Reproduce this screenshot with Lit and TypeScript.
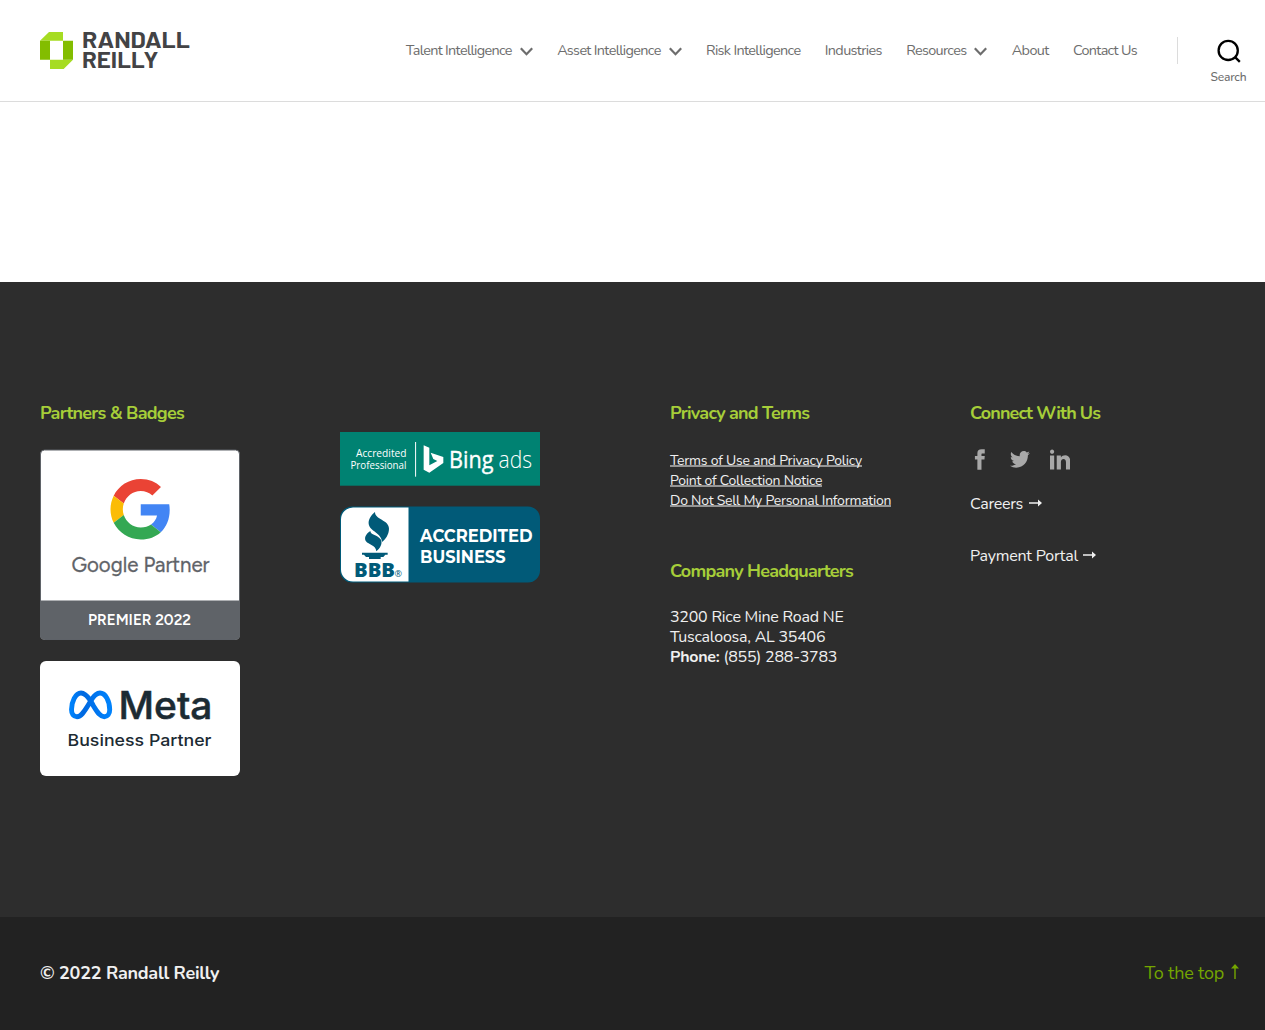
import { LitElement, html, css, svg, nothing } from "lit";
import { customElement, property } from "lit/decorators.js";

/** One line of text, tracked so that it fills a given width. */
@customElement("fit-label")
class FitLabel extends LitElement {
  @property({ type: Number }) width = 0;
  @property() text = "";

  static styles = css`
    :host { display: inline-block; white-space: nowrap; }
    .line { display: inline-block; white-space: pre; }
  `;

  updated() {
    const line = this.renderRoot.querySelector(".line") as HTMLElement;
    line.style.letterSpacing = "0px";
    const natural = line.getBoundingClientRect().width;
    const step = (this.width - natural) / this.text.length;
    line.style.letterSpacing = `${step.toFixed(3)}px`;
  }

  render() {
    return html`<span class="line">${this.text}</span>`;
  }
}

const fit = (text: string, width: number) =>
  html`<fit-label .text=${text} .width=${width}></fit-label>`;

@customElement("site-header")
class SiteHeader extends LitElement {
  static styles = css`
    :host { display: block; }
    .bar {
      box-sizing: border-box; height: 102px; border-bottom: 1px solid #dcdcdc;
      background: #fff; display: flex; align-items: center; padding: 0 0 1px 40px;
      color: #6d6d6d; font-size: 14.4px;
    }
    .logo { display: block; margin-top: 1px; overflow: visible; }
    nav { display: flex; gap: 24.3px; margin-left: auto; line-height: 20px; align-items: center; }
    .item { display: flex; align-items: center; gap: 8px; }
    .chev { display: block; margin-top: 3px; }
    .rule { width: 1px; height: 27px; background: #dcdcdc; margin-left: 40px; }
    .search {
      width: 87px; display: flex; flex-direction: column; align-items: center;
      padding: 23px 0 0 14px; box-sizing: border-box; font-size: 12px; line-height: 16px; font-weight: 500;
    }
    .search svg { display: block; margin-bottom: 6px; }
  `;

  items: [string, number, boolean][] = [
    ["Talent Intelligence", 106, true],
    ["Asset Intelligence", 103.5, true],
    ["Risk Intelligence", 94.5, false],
    ["Industries", 57.2, false],
    ["Resources", 60.2, true],
    ["About", 37, false],
    ["Contact Us", 64, false],
  ];

  render() {
    return html`
      <header class="bar">
        <svg class="logo" width="150" height="38" viewBox="0 0 450 114">
          <path fill="#a6dc22" d="M0 26 27 0h42v26zM30 83h69l-28 28H30z" />
          <path fill="#83bd00" d="M0 26h30v57H0zM69 26h30v57H69z" />
          <g fill="#434345" font-family="'DIN Next', Barlow, Roboto, sans-serif" font-weight="700" font-size="67">
            <text x="126" y="47" textLength="324" lengthAdjust="spacingAndGlyphs">RANDALL</text>
            <text x="126" y="109" textLength="229" lengthAdjust="spacingAndGlyphs">REILLY</text>
          </g>
        </svg>
        <nav>
          ${this.items.map(([t, w, sub]) => html`
            <span class="item">${fit(t, w)}${sub
              ? html`<svg class="chev" width="13" height="9" viewBox="0 0 13 9">
                  <path d="M.8 1.200 6.500 7.200 12.200 1.200" fill="none" stroke="#6d6d6d" stroke-width="2.200" />
                </svg>`
              : nothing}</span>`)}
        </nav>
        <span class="rule"></span>
        <span class="search">
          <svg width="24" height="24" viewBox="0 0 24 24" fill="none" stroke="#000" stroke-width="2.300">
            <circle cx="11.200" cy="11.400" r="9.600" /><path d="m17.800 17.900 5 5" />
          </svg>
          ${fit("Search", 36)}
        </span>
      </header>`;
  }
}

const googleBadge = svg`
  <svg class="badge" width="200" height="191" viewBox="0 0 200 191">
    <rect x=".5" y="1" width="199" height="189.500" rx="4" fill="#fff" stroke="#5f6368" />
    <path d="M0 151.500h200v34.500a4.500 4.500 0 0 1-4.500 4.500H4.500A4.500 4.500 0 0 1 0 186z" fill="#5f6368" />
    <g transform="translate(70.500 30) scale(1.260)">
      <path fill="#ea4335" d="M24 9.500c3.540 0 6.710 1.220 9.210 3.600l6.850-6.850C35.900 2.380 30.470 0 24 0 14.620 0 6.510 5.380 2.560 13.220l7.980 6.190C12.430 13.720 17.740 9.500 24 9.500z" />
      <path fill="#4285f4" d="M46.980 24.550c0-1.570-.150-3.090-.380-4.550H24v9.020h12.940c-.580 2.960-2.260 5.480-4.780 7.180l7.730 6c4.510-4.180 7.090-10.360 7.090-17.650z" />
      <path fill="#fbbc05" d="M10.530 28.590c-.480-1.450-.760-2.990-.760-4.590s.270-3.140.760-4.590l-7.980-6.190C.920 16.460 0 20.120 0 24c0 3.880.920 7.540 2.560 10.780l7.970-6.190z" />
      <path fill="#34a853" d="M24 48c6.480 0 11.930-2.130 15.890-5.810l-7.730-6c-2.150 1.450-4.920 2.300-8.160 2.300-6.260 0-11.570-4.220-13.470-9.910l-7.980 6.190C6.510 42.620 14.620 48 24 48z" />
    </g>
    <g font-family="'Google Sans', Figtree, Outfit, 'DM Sans', Lato, sans-serif">
      <text x="31.500" y="123" font-size="21" fill="#5f6368" stroke="#5f6368" stroke-width=".3" textLength="138" lengthAdjust="spacingAndGlyphs">Google Partner</text>
      <text x="48" y="176" font-size="15.500" font-weight="600" fill="#fff" textLength="103" lengthAdjust="spacingAndGlyphs">PREMIER 2022</text>
    </g>
  </svg>`;

const metaBadge = svg`
  <svg class="badge" width="200" height="115" viewBox="0 0 200 115">
    <defs>
      <linearGradient id="m" x1="0" x2="1">
        <stop offset="0" stop-color="#0082fb" /><stop offset=".3" stop-color="#0068e0" />
        <stop offset=".6" stop-color="#0074ee" /><stop offset="1" stop-color="#0082fb" />
      </linearGradient>
    </defs>
    <rect width="200" height="115" rx="6" fill="#fff" />
    <path fill="none" stroke="url(#m)" stroke-width="4.900" stroke-linejoin="round"
      d="M50.500 39.500C47 34.500 44 32 41 32c-5.500 0-9.500 9-9.500 16.500 0 4.500 2 7.200 5.500 7.200 4 0 7-4.700 11-11.200l3-5C54 34.500 56.500 32 60 32c5.500 0 9.700 8 9.700 16.700 0 4.300-2.200 7-5.400 7-3.800 0-6.300-3.200-10.800-10.700z" />
    <g fill="#1c2b33" font-family="Inter, sans-serif" font-weight="500">
      <text x="78.500" y="57.700" font-size="37.500" stroke="#1c2b33" stroke-width=".5" textLength="94" lengthAdjust="spacingAndGlyphs">Meta</text>
      <text x="27.500" y="84.900" font-size="16.500" font-weight="450" textLength="144" lengthAdjust="spacingAndGlyphs">Business Partner</text>
    </g>
  </svg>`;

const bingBadge = svg`
  <svg class="badge" width="200" height="54" viewBox="0 0 200 54">
    <rect width="200" height="53.700" fill="#008272" />
    <path d="M75.600 10v34.700" stroke="#fff" stroke-width="1" />
    <g transform="translate(-10 -12) scale(.3333)" fill="#fff">
      <path d="m281 76 17 7v53l24-13-12-6-8-19 38 13v18l-42 29-17-9z" />
    </g>
    <g fill="#fff" font-family="'Segoe UI', Selawik, 'Open Sans', sans-serif">
      <text x="16" y="25.300" font-size="10.800" textLength="50.500" lengthAdjust="spacingAndGlyphs">Accredited</text>
      <text x="10.500" y="37.300" font-size="10.800" textLength="56" lengthAdjust="spacingAndGlyphs">Professional</text>
      <text x="109" y="36.300" font-size="23.500" stroke="#fff" stroke-width=".4" textLength="44.500" lengthAdjust="spacingAndGlyphs">Bing</text>
      <text x="158.500" y="36.300" font-size="23.500" font-weight="300" textLength="33.500" lengthAdjust="spacingAndGlyphs">ads</text>
    </g>
  </svg>`;

const bbbBadge = svg`
  <svg class="badge" width="200" height="77" viewBox="0 0 200 77">
    <rect y=".5" width="200" height="76" rx="12" fill="#015a78" />
    <path d="M68.500 1.500v74H13a12 12 0 0 1-12-12v-50a12 12 0 0 1 12-12z" fill="#fff" />
    <g transform="translate(-10 -86) scale(.3333)" fill="#015a78">
      <path d="M135 276c-12 10-20 22-19 35 2 22 40 28 40 55 10-7 21-23 21-40 0-27-43-27-42-50z" />
      <path d="M121 333c-15 10-19 22-13 31 7 10 30 12 31 30 12-9 20-24 13-36-8-13-31-13-31-25z" />
      <path d="M96 398h77v6h-7l-6 7h-8v6h-35v-6h-9l-6-7h-6z" />
    </g>
    <g font-family="'Open Sans', sans-serif" font-weight="800">
      <text x="14" y="70.500" font-size="19.500" fill="#015a78" textLength="41" lengthAdjust="spacingAndGlyphs">BBB</text>
      <text x="54.500" y="70.500" font-size="9" font-weight="400" fill="#015a78">®</text>
    </g>
    <g font-family="Montserrat, 'Open Sans', sans-serif" font-weight="700" font-size="17.500" fill="#fff">
      <text x="80" y="36.300" textLength="112.500" lengthAdjust="spacingAndGlyphs">ACCREDITED</text>
      <text x="80" y="57" textLength="85.500" lengthAdjust="spacingAndGlyphs">BUSINESS</text>
    </g>
  </svg>`;

@customElement("site-footer")
class SiteFooter extends LitElement {
  static styles = css`
    :host { display: block; }
    .main {
      box-sizing: border-box; height: 635px; background: #2d2d2d; color: #f0f0f0;
      display: grid; grid-template-columns: 300px 330px 300px 1fr; padding: 118px 0 0 40px;
    }
    h2 {
      margin: 0; color: #a6ce39; font-size: 18px; line-height: 26px; font-weight: 700; height: 26px;
    }
    .badges { display: flex; flex-direction: column; gap: 21px; align-items: flex-start; }
    .badges .badge { display: block; }
    .google { margin-top: 23px; }
    .second { padding-top: 32px; gap: 20px; }
    .links { margin-top: 25px; display: flex; flex-direction: column; align-items: flex-start; font-size: 14px; line-height: 20px; }
    .links a {
      height: 20px; color: #f0f0f0;
      background: linear-gradient(#959595, #959595) 0 14px / 100% 2px no-repeat;
    }
    .hq { margin-top: 47px; }
    .address { margin-top: 23px; font-size: 16px; line-height: 20px; display: flex; flex-direction: column; }
    .address > span { display: flex; height: 20px; }
    .bold { font-weight: 700; }
    .social { display: flex; gap: 20px; margin-top: 23px; height: 21px; }
    .social svg { display: block; fill: #a8a8a8; }
    .go { display: flex; align-items: center; gap: 6px; font-size: 16px; line-height: 20px; height: 20px; }
    .go svg { display: block; margin-top: -2px; }
    .first { margin-top: 24px; }
    .next { margin-top: 32px; gap: 5px; }
    .bottom {
      box-sizing: border-box; height: 113px; background: #222; padding: 0 26.500px 1px 40px;
      display: flex; align-items: center; justify-content: space-between; font-size: 18px; line-height: 24px;
    }
    .copy { color: #f0f0f0; font-weight: 700; }
    .top { color: #74a600; display: flex; align-items: center; gap: 6.500px; }
    .top svg { display: block; margin-top: -3px; }
  `;

  arrow = () => html`<svg width="13" height="8" viewBox="0 0 13 8">
    <path d="M0 3.200h9V.500L13 4 9 7.500V4.700H0z" fill="#f0f0f0" /></svg>`;

  render() {
    return html`
      <footer>
        <div class="main">
          <section>
            <h2>${fit("Partners & Badges", 144)}</h2>
            <div class="badges google">${googleBadge}${metaBadge}</div>
          </section>
          <section class="badges second">${bingBadge}${bbbBadge}</section>
          <section>
            <h2>${fit("Privacy and Terms", 139.2)}</h2>
            <div class="links">
              <a>${fit("Terms of Use and Privacy Policy", 192)}</a>
              <a>${fit("Point of Collection Notice", 152.3)}</a>
              <a>${fit("Do Not Sell My Personal Information", 221.3)}</a>
            </div>
            <h2 class="hq">${fit("Company Headquarters", 183)}</h2>
            <div class="address">
              <span>${fit("3200 Rice Mine Road NE", 173.5)}</span>
              <span>${fit("Tuscaloosa, AL 35406", 155.3)}</span>
              <span><span class="bold">${fit("Phone:", 49.5)}</span>${fit(" (855) 288-3783", 117.7)}</span>
            </div>
          </section>
          <section>
            <h2>${fit("Connect With Us", 130.2)}</h2>
            <div class="social">
              <svg width="20" height="21" viewBox="0 0 20 21"><path transform="translate(0 .3) scale(.82 .85)"
                d="M9 8H6v4h3v12h5V12h3.642L18 8h-4V6.333C14 5.378 14.192 5 15.115 5H18V0h-3.808C10.596 0 9 1.583 9 4.615z" /></svg>
              <svg width="20" height="21" viewBox="0 0 20 21"><path transform="translate(0 .2) scale(.83 .85)"
                d="M23.954 4.569c-.885.389-1.830.654-2.825.775 1.014-.611 1.794-1.574 2.163-2.723-.951.555-2.005.959-3.127 1.184-.896-.959-2.173-1.559-3.591-1.559-2.717 0-4.920 2.203-4.920 4.917 0 .390.045.765.127 1.124C7.691 8.094 4.066 6.130 1.640 3.161c-.427.722-.666 1.561-.666 2.475 0 1.710.870 3.213 2.188 4.096-.807-.026-1.566-.248-2.228-.616v.061c0 2.385 1.693 4.374 3.946 4.827-.413.111-.849.171-1.296.171-.314 0-.615-.030-.916-.086.631 1.953 2.445 3.377 4.604 3.417-1.680 1.319-3.809 2.105-6.102 2.105-.390 0-.779-.023-1.170-.067 2.189 1.394 4.768 2.209 7.557 2.209 9.054 0 13.999-7.496 13.999-13.986 0-.209 0-.420-.015-.630.961-.689 1.800-1.560 2.460-2.548z" /></svg>
              <svg width="20" height="21" viewBox="0 0 20 21"><path transform="translate(0 -.4) scale(.84 .87)"
                d="M4.980 3.500C4.980 4.881 3.870 6 2.500 6S.020 4.881.020 3.500C.020 2.120 1.130 1 2.500 1s2.480 1.120 2.480 2.500zM5 8H0v16h5zm7.982 0H8.014v16h4.969v-8.399c0-4.670 6.029-5.052 6.029 0V24H24V13.869c0-7.880-8.922-7.593-11.018-3.714z" /></svg>
            </div>
            <div class="go first">${fit("Careers", 53)}${this.arrow()}</div>
            <div class="go next">${fit("Payment Portal", 108)}${this.arrow()}</div>
          </section>
        </div>
        <div class="bottom">
          <span class="copy">${fit("© 2022 Randall Reilly", 179.3)}</span>
          <span class="top">${fit("To the top", 79.5)}
            <svg width="8" height="15" viewBox="0 0 8 15"><path d="M3.300 15V4.500H0L4 0l4 4.500H4.700V15z" fill="#74a600" /></svg>
          </span>
        </div>
      </footer>`;
  }
}

@customElement("app-root")
class AppRoot extends LitElement {
  static styles = css`
    :host { display: block; font-family: Nunito, Lato, "Open Sans", sans-serif; background: #fff; }
    .content { height: 180px; }
  `;
  render() {
    return html`<site-header></site-header><main class="content"></main><site-footer></site-footer>`;
  }
}
